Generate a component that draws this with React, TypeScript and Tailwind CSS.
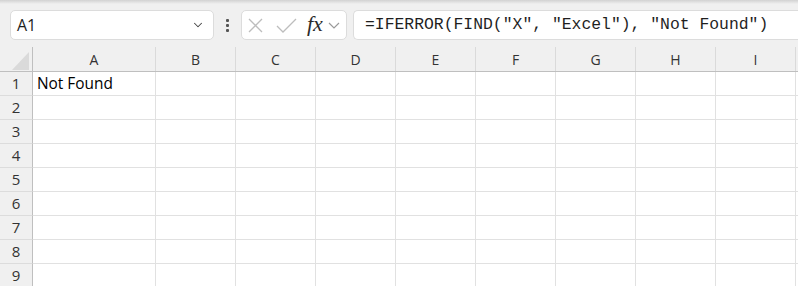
import { ChevronDown } from 'lucide-react'

const columns = ['B', 'C', 'D', 'E', 'F', 'G', 'H', 'I']
const rows = [1, 2, 3, 4, 5, 6, 7, 8, 9]

const uiFont = { fontFamily: '"Open Sans", "Noto Sans", sans-serif' }

export default function App() {
  return (
    <div
      className="w-[798px] h-[286px] overflow-hidden bg-[#f0f0f0] flex flex-col"
      style={uiFont}
    >
      {/* top shadow */}
      <div className="h-[4px] shrink-0 bg-gradient-to-b from-[#d2d2d2] to-[#f0f0f0]" />

      {/* Formula bar */}
      <div className="flex items-center pl-[10px] pt-[6px] h-[36px] shrink-0">
        {/* Name box */}
        <div className="w-[204px] h-[30px] shrink-0 bg-white border border-[#dcdcdc] rounded-[5px] flex items-center justify-between pl-[6px] pr-[8px]">
          <span className="text-[16px] text-[#1f1f1f] leading-none">A1</span>
          <ChevronDown className="w-[14px] h-[14px] text-[#444]" strokeWidth={1.75} />
        </div>

        {/* More dots */}
        <div className="w-[27px] shrink-0 flex flex-col items-center gap-[2px]">
          <span className="w-[3px] h-[3px] bg-[#555] rounded-[1px]" />
          <span className="w-[3px] h-[3px] bg-[#555] rounded-[1px]" />
          <span className="w-[3px] h-[3px] bg-[#555] rounded-[1px]" />
        </div>

        {/* Cancel / Enter / fx */}
        <div className="w-[106px] h-[30px] shrink-0 bg-white border border-[#dcdcdc] rounded-[5px] flex items-center pl-[6px]">
          <svg width="15" height="15" viewBox="0 0 15 15" className="shrink-0">
            <path d="M1 1 L14 14 M14 1 L1 14" stroke="#bdbdbd" strokeWidth="1.3" fill="none" />
          </svg>
          <svg width="21" height="15" viewBox="0 0 21 15" className="ml-[13px] shrink-0">
            <path d="M1 8 L7 14 L20 1" stroke="#bdbdbd" strokeWidth="1.3" fill="none" />
          </svg>
          <span
            className="ml-[10px] text-[22px] italic text-[#2b2b2b] leading-none -mt-[3px]"
            style={{ fontFamily: '"Liberation Serif", "DejaVu Serif", serif' }}
          >
            fx
          </span>
          <svg width="12" height="7" viewBox="0 0 12 7" className="ml-[5px] shrink-0">
            <path d="M1 1 L6 6 L11 1" stroke="#9a9a9a" strokeWidth="1.2" fill="none" />
          </svg>
        </div>

        {/* Formula input */}
        <div className="ml-[6px] w-[460px] h-[30px] bg-white border border-r-0 border-[#dcdcdc] rounded-l-[5px] flex items-center pl-[11px] shrink-0">
          <span
            className="text-[16.4px] text-[#1f1f1f] whitespace-pre leading-none"
            style={{ fontFamily: '"Liberation Mono", "DejaVu Sans Mono", monospace' }}
          >
            =IFERROR(FIND("X", "Excel"), "Not Found")
          </span>
        </div>
      </div>

      {/* Grid */}
      <div className="mt-[7px] flex flex-col">
        {/* Column headers */}
        <div className="flex h-[25px] border-b border-[#bfbfbf]">
          <div className="w-[33px] shrink-0 border-r border-[#bfbfbf] relative">
            <svg width="17" height="18" viewBox="0 0 17 18" className="absolute right-[3px] bottom-[1px]">
              <polygon points="0,18 17,18 17,0" fill="#dadada" />
            </svg>
          </div>
          <div className="w-[123px] shrink-0 border-r border-[#dadada] flex items-center justify-center text-[14px] text-[#333]">
            A
          </div>
          {columns.map((c) => (
            <div
              key={c}
              className="w-[80px] shrink-0 border-r border-[#dadada] flex items-center justify-center text-[14px] text-[#333]"
            >
              {c}
            </div>
          ))}
          <div className="flex-1" />
        </div>

        {/* Rows */}
        {rows.map((r) => (
          <div key={r} className="flex h-[24px]">
            <div className="w-[33px] shrink-0 border-r border-[#bfbfbf] border-b border-b-[#dcdcdc] flex items-center justify-center text-[15px] text-[#333]">
              {r}
            </div>
            <div className="w-[123px] shrink-0 bg-white border-r border-b border-[#e1e1e1] flex items-center pl-[4px] text-[15.4px] text-black">
              {r === 1 ? 'Not Found' : ''}
            </div>
            {columns.map((c) => (
              <div key={c} className="w-[80px] shrink-0 bg-white border-r border-b border-[#e1e1e1]" />
            ))}
            <div className="flex-1 bg-white border-b border-[#e1e1e1]" />
          </div>
        ))}
      </div>
    </div>
  )
}
